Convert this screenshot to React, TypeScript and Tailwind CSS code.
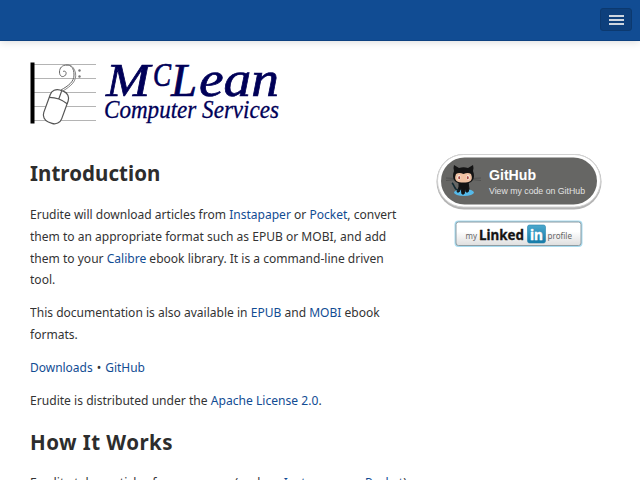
import type { ReactNode } from "react";

function Link({ children }: { children: ReactNode }) {
  return <a href="#" className="text-[#114c93]">{children}</a>;
}

function Logo() {
  return (
    <svg width="250" height="65" viewBox="30 61 250 65" className="block overflow-visible" fontFamily="'Liberation Serif', serif" fontStyle="italic" fill="#000058">
      <path d="M33 64.5H96M33 78.5H96M33 92.5H96M33 106.5H96M33 120.5H96" stroke="#b4b4b4" />
      <rect x="30.5" y="62.5" width="4" height="61" fill="#000" />
      <g fill="none" stroke="#666" strokeWidth="1">
        <path d="M61 90C68 86 74 82 74 75C74 68 71 65 67 65C62 65 59.5 68 59.5 72C59.5 76 62 77.5 64.5 76C67.5 74 66 70 63 71.5" />
        <path d="M63 91C71 86 77 81 75.5 73C74 67 71 64.5 66 65" stroke="#888" />
      </g>
      <circle cx="79.5" cy="70.5" r="1.2" fill="#777" />
      <circle cx="79.5" cy="76.5" r="1.2" fill="#777" />
      <g transform="rotate(20 55.5 106.5)" fill="none" stroke="#555" strokeWidth="1.2">
        <rect x="46.5" y="89.5" width="19" height="34" rx="7.5" fill="#fff" />
        <path d="M46.5 100Q56 96.5 65.5 100M56 90V98" />
      </g>
      <g stroke="#000058" strokeWidth="0.7">
        <text x="106" y="95.5" fontSize="46" textLength="44" lengthAdjust="spacingAndGlyphs">M</text>
        <text x="153" y="85.5" fontSize="33" textLength="18" lengthAdjust="spacingAndGlyphs">C</text>
        <text x="171" y="95.5" fontSize="46" textLength="26" lengthAdjust="spacingAndGlyphs">L</text>
        <text x="199" y="95.5" fontSize="50" textLength="80" lengthAdjust="spacingAndGlyphs">ean</text>
        <text x="104" y="117.8" fontSize="24.5" strokeWidth="0.3" textLength="175" lengthAdjust="spacingAndGlyphs">Computer Services</text>
      </g>
    </svg>
  );
}

function GitHubBadge() {
  return (
    <svg width="166" height="57" viewBox="436 153 166 57" className="block" fontFamily="'Liberation Sans', Arial, sans-serif">
      <rect x="436.5" y="154" width="165" height="55.5" rx="27.5" fill="#b4b4b4" />
      <rect x="437.5" y="154.5" width="163" height="52.5" rx="26" fill="#fff" stroke="#d2d2d2" />
      <rect x="441" y="157.5" width="156" height="47" rx="23.5" fill="#666664" />
      <ellipse cx="464" cy="192.5" rx="10" ry="3.5" fill="#55b9e9" />
      <path d="M446 178L456 178.5M446 180.5L456 179.5M471 178.5L481 178M471 179.5L481 180.5" stroke="#444" strokeWidth=".6" />
      <path d="M459 182H468L469 189L468 192H466L465.5 188L464 194H462L461 188L459 192H457L459 187Z" fill="#141414" stroke="#141414" />
      <path d="M459 190C454 191 455 185 452 183" fill="none" stroke="#142a32" strokeWidth="1.7" />
      <path d="M454 165L459 168Q463.5 166.5 468 168L473 165Q474 168 473 171C476 179 472 184 463.5 184S451 179 454 171Q453 168 454 165Z" fill="#141414" />
      <path d="M456 174Q459 172 463.5 174Q468 172 471 174C474 181 469 182.5 463.5 182.5S453 181 456 174Z" fill="#f0c2a3" />
      <ellipse cx="459" cy="177.5" rx="1.5" ry="2.3" fill="#fff" />
      <ellipse cx="468" cy="177.5" rx="1.5" ry="2.3" fill="#fff" />
      <ellipse cx="459.2" cy="177.7" rx="1" ry="1.6" fill="#a44a42" />
      <ellipse cx="467.8" cy="177.7" rx="1" ry="1.6" fill="#a44a42" />
      <text x="489" y="180" fontSize="14" fontWeight="700" fill="#fff" textLength="47" lengthAdjust="spacingAndGlyphs">GitHub</text>
      <text x="489" y="193.5" fontSize="8.5" fill="#e2e2e2" textLength="96" lengthAdjust="spacingAndGlyphs">View my code on GitHub</text>
    </svg>
  );
}

function LinkedInBadge() {
  return (
    <svg width="130" height="28" viewBox="454 220 130 28" className="block" fontFamily="'Noto Sans', sans-serif">
      <defs>
        <linearGradient id="plate" x1="0" y1="0" x2="0" y2="1">
          <stop offset="0.4" stopColor="#fff" />
          <stop offset="1" stopColor="#dedede" />
        </linearGradient>
        <linearGradient id="mark" x1="0" y1="0" x2="0" y2="1">
          <stop stopColor="#4ba8cd" />
          <stop offset="1" stopColor="#147aa8" />
        </linearGradient>
      </defs>
      <rect x="454.5" y="220.5" width="128" height="26.5" rx="4" fill="#a9dcf0" />
      <rect x="456" y="222" width="125" height="23.5" rx="2.5" fill="url(#plate)" stroke="#8d9ca3" />
      <text x="465.5" y="239" fontSize="9.5" fill="#666" textLength="11.5" lengthAdjust="spacingAndGlyphs">my</text>
      <text x="479" y="239.5" fontSize="14.5" fontWeight="700" fill="#141414" stroke="#141414" strokeWidth=".3" textLength="45" lengthAdjust="spacingAndGlyphs">Linked</text>
      <rect x="527.5" y="225" width="18" height="18" rx="2" fill="url(#mark)" stroke="#2684ad" strokeWidth=".6" />
      <text x="530" y="239.7" fontSize="15" fontWeight="700" fill="#fff" stroke="#fff" strokeWidth=".4" textLength="13" lengthAdjust="spacingAndGlyphs">in</text>
      <text x="547.5" y="239" fontSize="9.5" fill="#666" textLength="24.5" lengthAdjust="spacingAndGlyphs">profile</text>
    </svg>
  );
}

export default function App() {
  return (
    <div className="h-[480px] w-[640px] overflow-hidden bg-white font-['Noto_Sans',sans-serif] text-[13.2px] leading-[21.67px] text-[#333]">
      <header className="flex h-[41px] items-start justify-end border-b border-[#0d4180] bg-[#114c93] pt-2 pr-2 shadow-[0_1px_8px_rgba(0,0,0,0.15)]">
        <button aria-label="Menu" className="flex h-[23px] w-8 flex-col items-center justify-center gap-[2px] rounded-[3px] border border-[#0c396f] bg-[#0e407c]">
          <span className="h-[2px] w-[15px] bg-[#ced6df]" />
          <span className="h-[2px] w-[15px] bg-[#ced6df]" />
          <span className="h-[2px] w-[15px] bg-[#ced6df]" />
        </button>
      </header>
      <div className="pt-5 pl-[30px]"><Logo /></div>
      <div className="flex pt-[27px]">
        <main className="w-[436px] shrink-0 pl-[30px] whitespace-nowrap">
          <h1 className="h-[51.4px] pt-[9px] text-[20.5px] leading-[22px] font-bold tracking-[0.05px] text-[#2d2d2d]">Introduction</h1>
          <p className="mb-[11.2px] origin-left scale-x-[0.913]">
            Erudite will download articles from <Link>Instapaper</Link> or <Link>Pocket</Link>, convert<br />
            them to an appropriate format such as EPUB or MOBI, and add<br />
            them to your <Link>Calibre</Link> ebook library. It is a command-line driven<br />
            tool.
          </p>
          <p className="mb-[11.6px] origin-left scale-x-[0.913]">
            This documentation is also available in <Link>EPUB</Link> and <Link>MOBI</Link> ebook<br />formats.
          </p>
          <p className="mb-[11.2px] origin-left scale-x-[0.907]"><Link>Downloads</Link><span className="mx-[1px]"> • </span><Link>GitHub</Link></p>
          <p className="origin-left scale-x-[0.917]">Erudite is distributed under the <Link>Apache License 2.0</Link>.</p>
          <h2 className="h-[60.4px] pt-[19px] text-[20.5px] leading-[22px] font-bold tracking-[0.45px] text-[#2d2d2d]">How It Works</h2>
          <p className="origin-left scale-x-[0.923]">Erudite takes articles from a source (such as <Link>Instapaper</Link> or <Link>Pocket</Link>)</p>
        </main>
        <aside className="flex flex-col">
          <GitHubBadge />
          <div className="mt-[10px] ml-[18px]"><LinkedInBadge /></div>
        </aside>
      </div>
    </div>
  );
}
